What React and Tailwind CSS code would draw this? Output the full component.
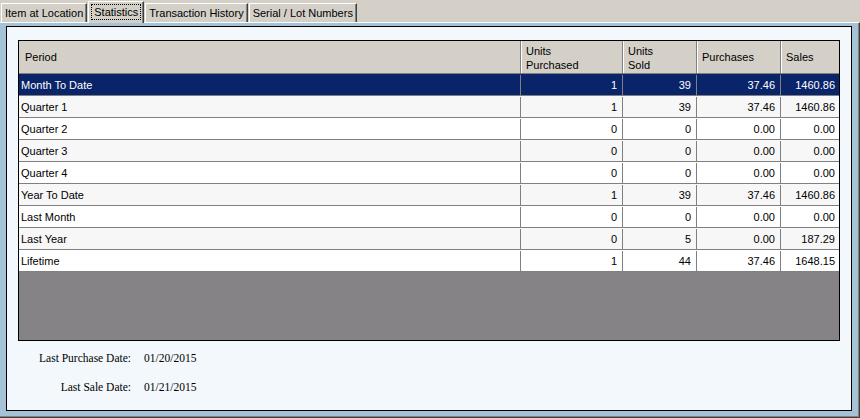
import React from "react";

const rows = [
  ["Month To Date", "1", "39", "37.46", "1460.86"],
  ["Quarter 1", "1", "39", "37.46", "1460.86"],
  ["Quarter 2", "0", "0", "0.00", "0.00"],
  ["Quarter 3", "0", "0", "0.00", "0.00"],
  ["Quarter 4", "0", "0", "0.00", "0.00"],
  ["Year To Date", "1", "39", "37.46", "1460.86"],
  ["Last Month", "0", "0", "0.00", "0.00"],
  ["Last Year", "0", "5", "0.00", "187.29"],
  ["Lifetime", "1", "44", "37.46", "1648.15"],
];

const widths = ["w-[502px]", "w-[102px]", "w-[74px]", "w-[84px]", "w-[58px]"];

function Tab({ label, selected }) {
  if (selected) {
    return (
      <div className="relative z-10 h-[22px] mb-[-1px] px-[2px] pt-[2px] bg-[#d4d0c8] border-t border-l border-white border-r border-r-[#404040] shadow-[inset_-1px_0_0_#808080]">
        <div className="border border-dotted border-black px-[2px] leading-[14px]">{label}</div>
      </div>
    );
  }
  return (
    <div className="h-[19px] px-[3px] pt-[2px] leading-[14px] bg-[#d4d0c8] border-t border-l border-white border-r border-r-[#404040] shadow-[inset_-1px_0_0_#808080]">
      {label}
    </div>
  );
}

export default function App() {
  return (
    <div
      className="w-[860px] h-[418px] bg-[#d4d0c8] flex flex-col text-[11px] text-black overflow-hidden"
      style={{ fontFamily: "'Liberation Sans', Arial, sans-serif" }}
    >
      <div className="h-[22px] flex items-end pl-[1px] gap-[1px]">
        <Tab label="Item at Location" />
        <Tab label="Statistics" selected />
        <Tab label="Transaction History" />
        <Tab label="Serial / Lot Numbers" />
      </div>
      <div className="flex-1 flex flex-col border-t border-white border-r border-r-[#404040] border-b border-b-[#404040] shadow-[inset_-1px_-1px_0_#808080] bg-[#a6c2d6] pt-[3px] pl-[6px] pr-[7px] pb-[6px]">
        <div className="flex-1 border border-black bg-[#f3f8fc] pt-[13px] pl-[11px] pr-[11px] flex flex-col">
          <div className="w-[822px] h-[301px] border border-black bg-[#858386] flex flex-col">
            <div className="flex h-[33px] bg-[#d4d0c8] border-b border-[#808080]">
              <div className={`${widths[0]} border-r border-[#808080] pl-[6px] flex items-center`}>Period</div>
              <div className={`${widths[1]} border-r border-[#808080] shadow-[inset_1px_0_0_#fff] pl-[5px] pt-[3px] leading-[14px]`}>
                Units<br />Purchased
              </div>
              <div className={`${widths[2]} border-r border-[#808080] shadow-[inset_1px_0_0_#fff] pl-[5px] pt-[3px] leading-[14px]`}>
                Units<br />Sold
              </div>
              <div className={`${widths[3]} border-r border-[#808080] shadow-[inset_1px_0_0_#fff] pl-[5px] flex items-center`}>Purchases</div>
              <div className={`${widths[4]} shadow-[inset_1px_0_0_#fff] pl-[5px] flex items-center`}>Sales</div>
            </div>
            {rows.map((r, i) => {
              const sel = i === 0;
              const bg = sel ? "bg-[#0a246a] text-white" : i % 2 === 1 ? "bg-[#f7f7f7]" : "bg-white";
              return (
                <div key={r[0]} className={`flex h-[22px] pt-[1px] border-b border-[#808080] ${bg}`}>
                  <div className={`${widths[0]} border-r border-[#808080] pl-[2px] flex items-center`}>{r[0]}</div>
                  <div className={`${widths[1]} border-r border-[#808080] pr-[5px] flex items-center justify-end`}>{r[1]}</div>
                  <div className={`${widths[2]} border-r border-[#808080] pr-[5px] flex items-center justify-end`}>{r[2]}</div>
                  <div className={`${widths[3]} border-r border-[#808080] pr-[5px] flex items-center justify-end`}>{r[3]}</div>
                  <div className={`${widths[4]} pr-[4px] flex items-center justify-end`}>{r[4]}</div>
                </div>
              );
            })}
          </div>
          <div
            className="grid grid-cols-[113px_auto] gap-x-[13px] gap-y-[14px] mt-[10px] text-[11.5px] leading-[15px]"
            style={{ fontFamily: "'Liberation Serif', 'Times New Roman', serif" }}
          >
            <div className="text-right">Last Purchase Date:</div>
            <div>01/20/2015</div>
            <div className="text-right">Last Sale Date:</div>
            <div>01/21/2015</div>
          </div>
        </div>
      </div>
    </div>
  );
}
